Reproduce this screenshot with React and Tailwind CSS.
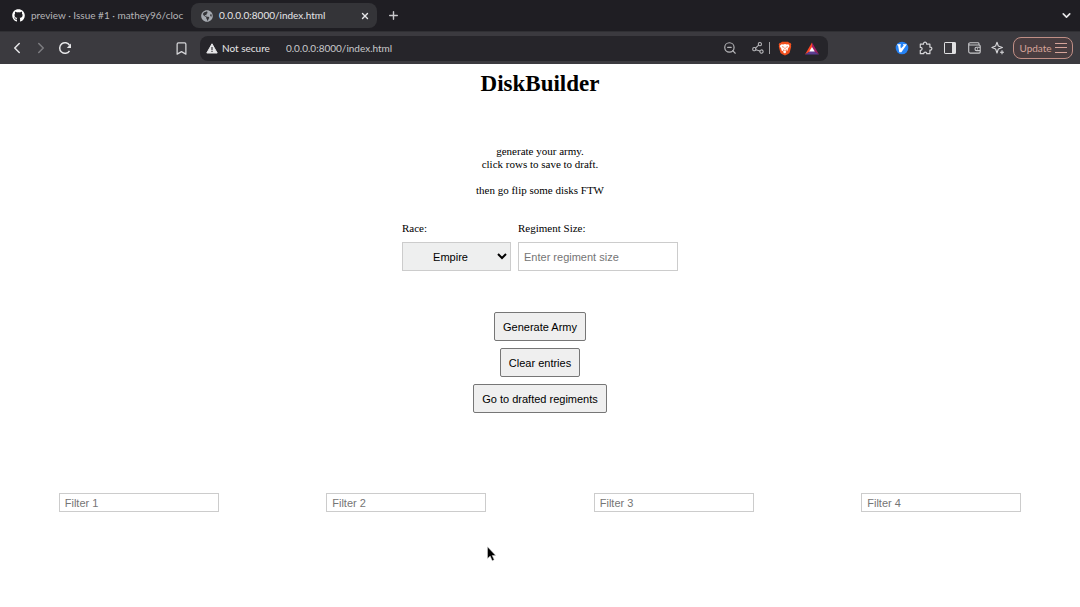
import React from "react";
import { Bookmark, ChevronDown, ChevronLeft, ChevronRight, Plus, Share2, X, ZoomOut } from "lucide-react";
import { FaGithub, FaGlobeAmericas } from "react-icons/fa";

const iconButton = "flex h-6 w-6 shrink-0 items-center justify-center";

function ReloadIcon() {
  return (
    <svg width="14" height="14" viewBox="0 0 14 14" fill="none" stroke="currentColor" strokeWidth="1.5" aria-hidden="true">
      <path d="M11.500 9.800A5.300 5.300 0 1 1 11.600 4.400" />
      <path d="M13 2.600v4.300H8.800z" fill="currentColor" stroke="none" />
    </svg>
  );
}

function WarningIcon() {
  return (
    <svg width="12" height="11" viewBox="0 0 12 11" className="shrink-0" aria-hidden="true">
      <path d="M6 .8 11.2 10H.8z" fill="#e6e6e8" stroke="#e6e6e8" strokeWidth="1" strokeLinejoin="round" />
      <path d="M6 4v3M6 7.8v1.1" stroke="#26252a" strokeWidth="1.1" />
    </svg>
  );
}

function BraveIcon() {
  return (
    <svg width="14" height="15" viewBox="0 0 14 15" aria-hidden="true">
      <path d="M4 .7h6l1.200 1.100 1.300.1.8 1.600-.4 1.200.3 1-1.400 5.200c-.3 1-.8 1.400-1.600 2L7 14.600l-3.200-1.700c-.8-.6-1.300-1-1.600-2L.8 5.700l.3-1L.7 3.500l.8-1.600 1.300-.1z" fill="#f2501e" />
      <path d="m3.600 3.200 1.600.3L7 3l1.800.5 1.600-.3 1.200 1.900-1.900 3 .2 1.200-2.200 1.300.4.7L7 12.400l-1.900-1.100.4-.7-2.200-1.300.2-1.200-1.900-3z" fill="#fff" />
      <path d="m3.700 5.200 2 .5-.4 1.200zM10.300 5.200l-2 .5.4 1.200zM7 5.500l.5 2.600-.5.500-.5-.5zM5.100 8.200l1.700 1.300-1.300.7zM8.900 8.200 7.200 9.500l1.300.7z" fill="#f2501e" />
    </svg>
  );
}

function RewardsIcon() {
  return (
    <svg width="14" height="13" viewBox="0 0 14 13" aria-hidden="true">
      <path d="M7 .5 0 12.500l7-4.300z" fill="#ff4724" />
      <path d="m7 .5 7 12-7-4.300z" fill="#9e1f63" />
      <path d="M0 12.500h14L7 8z" fill="#5b3d91" />
      <path d="M7 5 4.200 9.600h5.600z" fill="#fff" />
    </svg>
  );
}

function VimiumIcon() {
  return (
    <svg width="14" height="14" viewBox="0 0 14 14" aria-hidden="true">
      <circle cx="7" cy="7" r="6.300" fill="#2582f5" />
      <path d="M2.200 3.300h3.700v1l-.6.3.6 3 2.900-3.200-.8-.3v-.8h3.900L6.400 11.200H4.300L3.100 4.600l-.9-.3z" fill="#fff" />
    </svg>
  );
}

function ExtensionsIcon() {
  return (
    <svg width="14" height="14" viewBox="0 0 14 14" fill="none" stroke="currentColor" strokeWidth="1.200" strokeLinejoin="round" aria-hidden="true">
      <path d="M1.300 3.200h3.200c-.4-2.700 3.500-2.700 3.100 0h3.300v3c2.600-.4 2.600 3.300 0 2.900v3.600H7.700c.3-2.200-3.200-2.200-2.900 0H1.300V9.300c2.400.3 2.400-3.200 0-2.900z" />
    </svg>
  );
}

function SidebarIcon() {
  return (
    <svg width="12" height="12" viewBox="0 0 12 12" aria-hidden="true">
      <rect x=".5" y=".5" width="11" height="11" rx=".6" fill="none" stroke="#e0e0e2" />
      <path d="M8 .5h3.500v11H8z" fill="#e0e0e2" />
    </svg>
  );
}

function WalletIcon() {
  return (
    <svg width="13" height="12" viewBox="0 0 13 12" fill="none" stroke="#c9c9cc" strokeWidth="1.1" aria-hidden="true">
      <path d="M11 3V1.800c0-.6-.3-1-.9-1H2.200C1.300.8.7 1.300.7 2v7.500c0 1 .5 1.600 1.500 1.600h8.900c.7 0 1.100-.4 1.100-1V4c0-.7-.4-1-1.100-1H2C1.200 3 .7 2.700.7 2" />
      <path d="M12.200 5.200H8.600C7.500 5.200 7 6 7 6.900s.5 1.700 1.600 1.700h3.600M9.500 6.300v1.200" />
    </svg>
  );
}

function SparkleIcon() {
  return (
    <svg width="14" height="14" viewBox="0 0 14 14" fill="none" stroke="#d9d9dc" strokeWidth="1.1" strokeLinejoin="round" aria-hidden="true">
      <path d="M6 1.300 7.300 5 11.400 6.500 7.300 8 6 12 4.600 8 .9 6.500 4.600 5z" />
      <path d="M11 9.300v4M9 11.300h4" />
    </svg>
  );
}

function MenuIcon() {
  return (
    <svg width="12" height="10" viewBox="0 0 12 10" fill="none" stroke="currentColor" strokeWidth="1" className="shrink-0" aria-hidden="true">
      <path d="M0 .5h12M0 4.500h12M0 9.500h12" />
    </svg>
  );
}

function Browser() {
  return (
    <header className="font-['Lato','Noto_Sans',sans-serif] text-[10px] text-[#e6e6e8]">
      <div className="flex h-8 items-center border-b border-[#303034] bg-[#1f1e23]">
        <div className="flex w-[191px] shrink-0 items-center gap-1.5 pl-3 text-[#b5b5b8]">
          <FaGithub size={13} className="shrink-0 text-white" />
          <span className="whitespace-nowrap">preview · Issue #1 · mathey96/cloc</span>
        </div>
        <div className="flex h-[25px] w-[186px] items-center gap-1.5 rounded-lg bg-[#343438] pr-1 pl-2.5">
          <FaGlobeAmericas size={12} className="shrink-0 text-[#a5a9b0]" />
          <span className="grow">0.0.0.0:8000/index.html</span>
          <button aria-label="Close tab" className="flex h-4 w-4 items-center justify-center">
            <X size={10} strokeWidth={3.2} />
          </button>
        </div>
        <button aria-label="New tab" className="ml-1 flex h-6 w-6 items-center justify-center text-[#c9c9cc]">
          <Plus size={13} strokeWidth={2.6} />
        </button>
        <button aria-label="Search tabs" className="mr-0.5 ml-auto flex h-6 w-6 items-center justify-center">
          <ChevronDown size={13} strokeWidth={3} />
        </button>
      </div>
      <div className="flex h-8 items-center bg-[#3b3a3f] pr-[7px] pl-[5px]">
        <button aria-label="Back" className={iconButton}><ChevronLeft size={18} strokeWidth={2} /></button>
        <button aria-label="Forward" className={`${iconButton} text-[#7d7d81]`}><ChevronRight size={18} strokeWidth={2} /></button>
        <button aria-label="Reload" className={iconButton}><ReloadIcon /></button>
        <button aria-label="Bookmark" className={`${iconButton} ml-[92px] text-[#d5d5d8]`}><Bookmark size={15} strokeWidth={2} /></button>
        <div className="ml-[7px] flex h-[25px] min-w-0 grow items-center rounded-lg bg-[#26252a] pr-1 pl-1.5">
          <WarningIcon />
          <span className="ml-1 whitespace-nowrap">Not secure</span>
          <input aria-label="Address" defaultValue="0.0.0.0:8000/index.html" className="ml-4 min-w-0 grow bg-transparent text-[#c9c9cc] outline-none" />
          <button aria-label="Zoom out" className={`${iconButton} text-[#b5b5b8]`}><ZoomOut size={14} strokeWidth={2} /></button>
          <button aria-label="Share" className={`${iconButton} ml-[3px] text-[#b5b5b8]`}><Share2 size={13} strokeWidth={2} className="-rotate-12" /></button>
          <span className="h-3 w-px bg-[#a0a0a3]" />
          <button aria-label="Brave Shields" className={`${iconButton} ml-[3px]`}><BraveIcon /></button>
          <button aria-label="Brave Rewards" className={`${iconButton} ml-[3px]`}><RewardsIcon /></button>
        </div>
        <div className="ml-[62px] flex shrink-0 items-center">
          <button aria-label="Vimium" className={iconButton}><VimiumIcon /></button>
          <button aria-label="Extensions" className={`${iconButton} text-[#d5d5d8]`}><ExtensionsIcon /></button>
          <button aria-label="Sidebar" className={iconButton}><SidebarIcon /></button>
          <button aria-label="Wallet" className={iconButton}><WalletIcon /></button>
          <button aria-label="Leo" className={iconButton}><SparkleIcon /></button>
          <button className="ml-[3px] flex h-[22px] w-[60px] items-center justify-center gap-[3px] rounded-lg border border-[#c08f86] bg-[#493d40] text-[#d6a49a]">
            Update
            <MenuIcon />
          </button>
        </div>
      </div>
    </header>
  );
}

const pageButton = "h-[29px] rounded-xs border border-[#767676] bg-[#efefef] px-2 text-black";
const filters = ["Filter 1", "Filter 2", "Filter 3", "Filter 4"];

export default function App() {
  return (
    <div className="min-h-screen bg-white">
      <Browser />
      <main className="relative flex flex-col items-center font-['Liberation_Serif',serif] text-[11px] leading-4 text-black">
        <h1 className="mt-1 text-[23px] leading-8 font-bold">DiskBuilder</h1>
        <p className="mt-[45px] text-center leading-[13px]">
          generate your army.
          <br />
          click rows to save to draft.
          <br />
          <br />
          then go flip some disks FTW
        </p>
        <form className="mt-[23px] flex gap-[7px]">
          <div className="flex flex-col gap-1.5">
            <label htmlFor="race">Race:</label>
            <select id="race" className="h-[29px] w-[109px] border border-[#cccccc] bg-[#eeefef] px-1.5 text-center font-['Liberation_Sans',sans-serif]">
              <option>Empire</option>
            </select>
          </div>
          <div className="flex flex-col gap-1.5">
            <label htmlFor="size">Regiment Size:</label>
            <input id="size" placeholder="Enter regiment size" className="h-[29px] w-40 border border-[#cccccc] px-[5px] font-['Liberation_Sans',sans-serif] placeholder:text-[#757575]" />
          </div>
        </form>
        <div className="mt-[41px] flex flex-col items-center gap-[7px] font-['Liberation_Sans',sans-serif]">
          <button className={pageButton}>Generate Army</button>
          <button className={pageButton}>Clear entries</button>
          <button className={pageButton}>Go to drafted regiments</button>
        </div>
        <div className="mt-20 grid w-full grid-cols-4 justify-items-center px-[5px] font-['Liberation_Sans',sans-serif]">
          {filters.map((name) => (
            <input key={name} aria-label={name} placeholder={name} className="h-[19px] w-40 border border-[#cccccc] px-[5px] placeholder:text-[#757575]" />
          ))}
        </div>
        <svg className="absolute top-[482px] left-[487px]" width="9" height="16" viewBox="0 0 9 16" aria-hidden="true">
          <path d="M.5.8v11.800l2.700-2.500 2 4.700 2-1-2-4.300h3.500z" fill="#000" stroke="#ddd" strokeWidth=".5" />
        </svg>
      </main>
    </div>
  );
}
